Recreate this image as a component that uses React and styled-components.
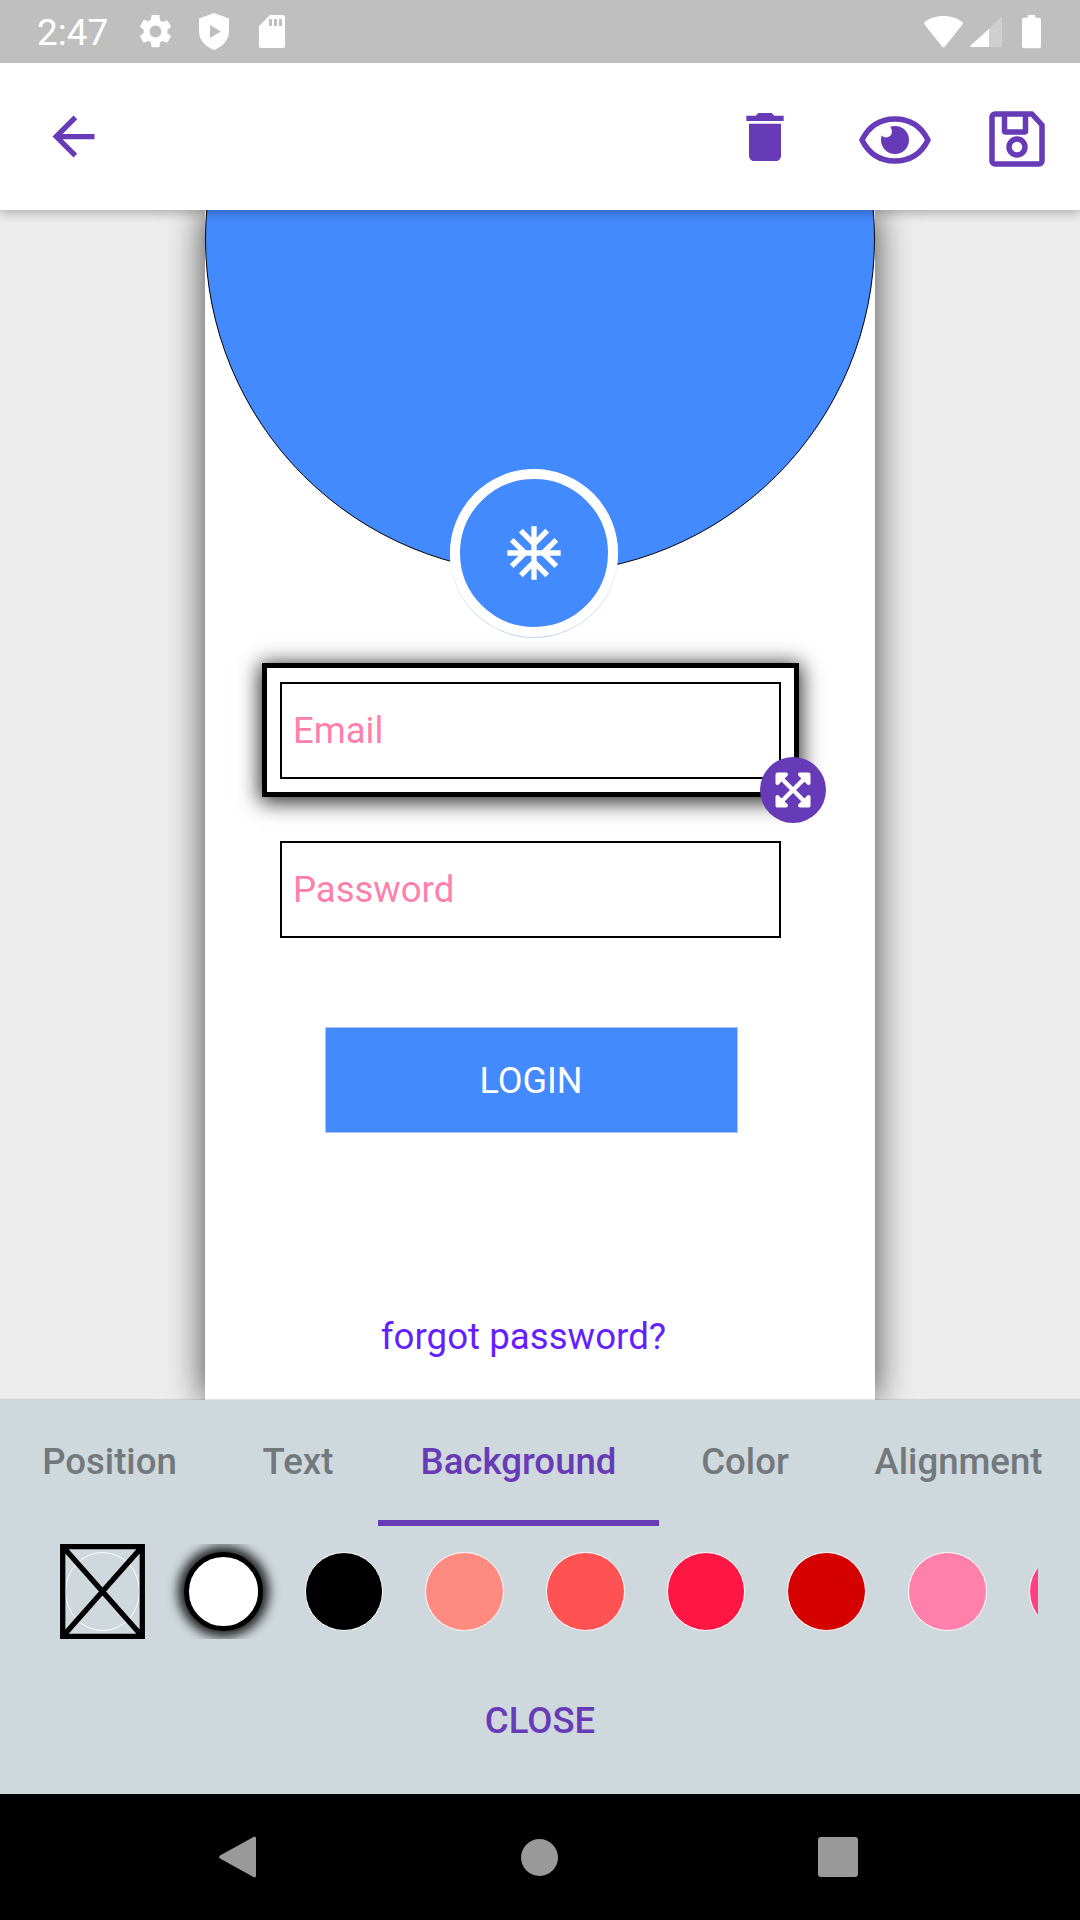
import React from "react";
import styled, { createGlobalStyle } from "styled-components";
import { MdAcUnit, MdArrowBack, MdDelete } from "react-icons/md";
import { FaExpandArrowsAlt } from "react-icons/fa";

const purple = "#673ab7";
const blue = "#448aff";
const pink = "#ff80ab";

const Global = createGlobalStyle`
  html, body { margin: 0; padding: 0; }
  body { font-family: Roboto, "Liberation Sans", sans-serif; }
`;

const Screen = styled.div`
  width: 1080px;
  height: 1920px;
  display: flex;
  flex-direction: column;
  overflow: hidden;
  background: #ededed;
`;

const StatusBar = styled.div`
  height: 63px;
  flex: none;
  background: #bfbfbf;
  display: flex;
  align-items: center;
  justify-content: space-between;
  padding: 0 39px 0 37px;
  color: #fff;
  font-size: 37px;
  position: relative;
  z-index: 3;
`;

const StatusGroup = styled.div`
  display: flex;
  align-items: center;
`;

const Clock = styled.span`
  margin-top: 1px;
`;

const StatusIcon = styled.svg`
  flex: none;
  margin-left: ${(p) => p.$ml}px;
`;

const AppBar = styled.div`
  height: 147px;
  flex: none;
  background: #fff;
  display: flex;
  align-items: center;
  justify-content: space-between;
  padding: 0 35px 0 42px;
  position: relative;
  z-index: 2;
  box-shadow: 0 3px 10px rgba(0, 0, 0, 0.28);
`;

const BackIcon = styled(MdArrowBack)`
  color: ${purple};
  font-size: 63px;
`;

const Actions = styled.div`
  display: flex;
  align-items: center;
`;

const TrashIcon = styled(MdDelete)`
  color: ${purple};
  font-size: 64px;
  margin-right: 62px;
`;

const EyeIcon = styled.svg`
  margin-right: 58px;
  margin-top: 6px;
`;

const SaveIcon = styled.svg`
  margin-top: 5px;
`;

const Canvas = styled.div`
  height: 1190px;
  flex: none;
  display: flex;
  justify-content: center;
`;

const Phone = styled.div`
  width: 670px;
  height: 100%;
  background: #fff;
  box-shadow: 0 0 34px rgba(0, 0, 0, 0.72);
  display: flex;
  flex-direction: column;
  align-items: center;
`;

const HeaderClip = styled.div`
  width: 100%;
  height: 366px;
  flex: none;
  overflow: hidden;
`;

const BlueCircle = styled.div`
  width: 670px;
  height: 670px;
  margin-top: -306px;
  box-sizing: border-box;
  border-radius: 50%;
  background: ${blue};
  border: 1px solid #000;
`;

const Logo = styled.div`
  width: 168px;
  height: 168px;
  flex: none;
  margin: -107px 0 0 -12px;
  box-sizing: border-box;
  border-radius: 50%;
  background: ${blue};
  border: 10px solid #fff;
  box-shadow: 0 1px 0 0 #c9d8f0;
  display: flex;
  align-items: center;
  justify-content: center;
  position: relative;
`;

const LogoIcon = styled(MdAcUnit)`
  color: #fff;
  font-size: 64px;
`;

const Selection = styled.div`
  width: 537px;
  height: 134px;
  flex: none;
  box-sizing: border-box;
  margin: 26px 0 0 -19px;
  border: 5px solid #000;
  box-shadow: 0 3px 20px 2px rgba(0, 0, 0, 0.85);
  display: flex;
  align-items: center;
  justify-content: center;
  position: relative;
`;

const PasswordSlot = styled.div`
  margin: 44px 0 0 -19px;
  flex: none;
`;

const Input = styled.div`
  width: 501px;
  height: 97px;
  box-sizing: border-box;
  border: 2.5px solid #000;
  padding-left: 11px;
  display: flex;
  align-items: center;
  color: ${pink};
  font-size: 36.5px;
  background: #fff;
`;

const ResizeHandle = styled.div`
  position: absolute;
  right: -32px;
  bottom: -31px;
  width: 66px;
  height: 66px;
  border-radius: 50%;
  background: ${purple};
  color: #fff;
  font-size: 40px;
  display: flex;
  align-items: center;
  justify-content: center;
`;

const LoginButton = styled.div`
  width: 413px;
  height: 106px;
  margin: 89px 0 0 -18px;
  padding-top: 1px;
  flex: none;
  box-sizing: border-box;
  background: ${blue};
  border: 1px solid #a9c6f5;
  color: #fff;
  font-size: 36px;
  display: flex;
  align-items: center;
  justify-content: center;
`;

const Forgot = styled.div`
  margin: 183px 0 0 -33px;
  font-size: 36.7px;
  line-height: 42px;
  color: #651fff;
`;

const Sheet = styled.div`
  height: 394px;
  flex: none;
  background: #cfd8dc;
  display: flex;
  flex-direction: column;
  position: relative;
  z-index: 1;
  box-shadow: 0 -1px 1px rgba(0, 0, 0, 0.1);
`;

const Tabs = styled.div`
  display: flex;
  height: 126px;
  flex: none;
  padding-left: 1px;
  overflow: hidden;
`;

const Tab = styled.div`
  width: ${(p) => p.$w}px;
  height: 126px;
  flex: none;
  box-sizing: border-box;
  text-align: center;
  padding-top: 41px;
  font-size: 36.6px;
  line-height: 42px;
  font-weight: 500;
  color: ${(p) => (p.$active ? purple : "#72787b")};
  border-bottom: 6px solid ${(p) => (p.$active ? purple : "transparent")};
`;

const Swatches = styled.div`
  width: 1038px;
  height: 95px;
  margin-top: 18px;
  flex: none;
  overflow: hidden;
  display: flex;
  align-items: center;
  gap: 42px;
  padding-left: 60px;
  box-sizing: border-box;
`;

const NoColor = styled.svg`
  flex: none;
  margin-right: -3px;
`;

const Swatch = styled.div`
  width: 78.7px;
  height: 78.7px;
  flex: none;
  box-sizing: border-box;
  border-radius: 50%;
  background: ${(p) => p.$color};
  border: 1px solid #fff;
`;

const SelectedSwatch = styled(Swatch)`
  background: #fff;
  border: 5px solid #000;
  box-shadow: 0 0 11px 6px rgba(0, 0, 0, 0.85);
`;

const CloseButton = styled.div`
  margin-top: 61px;
  text-align: center;
  color: ${purple};
  font-size: 36.5px;
  line-height: 42px;
  font-weight: 500;
`;

const NavBar = styled.div`
  height: 126px;
  flex: none;
  background: #000;
  display: flex;
  align-items: center;
  padding-left: 219px;
  box-sizing: border-box;
`;

const NavCircle = styled.div`
  width: 37px;
  height: 37px;
  border-radius: 50%;
  background: #999;
  margin-left: 264px;
`;

const NavSquare = styled.div`
  width: 40px;
  height: 40px;
  border-radius: 3px;
  background: #999;
  margin-left: 260px;
`;

const swatchColors = ["#000000", "#ff8a80", "#ff5252", "#ff1744", "#d50000", "#ff80ab", "#ff4081"];
const tabs = [
  ["Position", 217, false],
  ["Text", 160, false],
  ["Background", 281, true],
  ["Color", 172, false],
  ["Alignment", 255, false],
];

const App = () => (
  <Screen>
    <Global />
    <StatusBar>
      <StatusGroup>
        <Clock>2:47</Clock>
        <StatusIcon $ml={31} width="33" height="33" viewBox="2 2 20 20" fill="#fff">
          <path d="M19.14 12.94c.04-.3.06-.61.06-.94s-.02-.64-.07-.94l2.03-1.58a.49.49 0 0 0 .12-.61l-1.92-3.32a.49.49 0 0 0-.59-.22l-2.39.96a7 7 0 0 0-1.62-.94l-.36-2.54A.48.48 0 0 0 13.92 2h-3.84a.47.47 0 0 0-.47.41l-.36 2.54c-.59.24-1.13.57-1.62.94l-2.39-.96a.48.48 0 0 0-.59.22L2.74 8.87a.47.47 0 0 0 .12.61l2.03 1.58c-.05.3-.09.63-.09.94s.02.64.07.94l-2.03 1.58a.49.49 0 0 0-.12.61l1.92 3.32c.12.22.37.29.59.22l2.39-.96c.5.38 1.03.7 1.62.94l.36 2.54c.05.24.24.41.48.41h3.84c.24 0 .44-.17.47-.41l.36-2.54c.59-.24 1.13-.56 1.62-.94l2.39.96c.22.08.47 0 .59-.22l1.92-3.32a.47.47 0 0 0-.12-.61zM12 15.6A3.6 3.6 0 1 1 12 8.4a3.6 3.6 0 0 1 0 7.2z" />
        </StatusIcon>
        <StatusIcon $ml={27} width="30" height="37" viewBox="0 0 30 37">
          <path fill="#fff" fillRule="evenodd" d="M15 0l15 5.500V18c0 9-6 15.500-15 19C6 33.500 0 27 0 18V5.500zM11 12v13l11-6.500z" />
        </StatusIcon>
        <StatusIcon $ml={30} width="26" height="33" viewBox="0 0 26 33">
          <path fill="#fff" fillRule="evenodd" d="M11 0h13a2 2 0 0 1 2 2v29a2 2 0 0 1-2 2H2a2 2 0 0 1-2-2V11zM10 4v7h3V4zM15 4v7h3V4zM20 4v7h3V4z" />
        </StatusIcon>
      </StatusGroup>
      <StatusGroup>
        <StatusIcon $ml={0} width="41" height="32" viewBox="0 0 40 32">
          <path fill="#fff" d="M20 0c8 0 15 2.500 19 6.500a1.500 1.500 0 0 1 0 2L21.500 30.500a2 2 0 0 1-3 0L1 8.500a1.500 1.500 0 0 1 0-2C5 2.500 12 0 20 0z" />
        </StatusIcon>
        <StatusIcon $ml={6} width="32" height="32" viewBox="0 0 32 32">
          <path fill="#fff" fillOpacity="0.25" d="M32 0v31H19V13z" />
          <path fill="#fff" d="M19 13v18H1a1 1 0 0 1-.500-1.500z" />
        </StatusIcon>
        <StatusIcon $ml={20} width="19" height="35" viewBox="0 0 20 35">
          <path fill="#fff" d="M6 0h8v3h4a2 2 0 0 1 2 2v28a2 2 0 0 1-2 2H2a2 2 0 0 1-2-2V5a2 2 0 0 1 2-2h4z" />
        </StatusIcon>
      </StatusGroup>
    </StatusBar>

    <AppBar>
      <BackIcon />
      <Actions>
        <TrashIcon />
        <EyeIcon width="72" height="48" viewBox="0 0 72 48">
          <path fill="none" stroke={purple} strokeWidth="5.500" strokeLinejoin="round" d="M3 24C10 10 22 3 36 3s26 7 33 21c-7 14-19 21-33 21S10 38 3 24z" />
          <circle cx="36" cy="24" r="14" fill={purple} />
          <circle cx="27" cy="15.500" r="6" fill="#fff" />
        </EyeIcon>
        <SaveIcon width="56" height="56" viewBox="0 0 56 56" fill="none" stroke={purple} strokeWidth="5.500" strokeLinejoin="round">
          <path d="M3 6a3 3 0 0 1 3-3h37l10 11v36a3 3 0 0 1-3 3H6a3 3 0 0 1-3-3z" />
          <path d="M15.500 3v17a1 1 0 0 0 1 1h19a1 1 0 0 0 1-1V3" />
          <circle cx="28" cy="36" r="8" />
        </SaveIcon>
      </Actions>
    </AppBar>

    <Canvas>
      <Phone>
        <HeaderClip>
          <BlueCircle />
        </HeaderClip>
        <Logo>
          <LogoIcon />
        </Logo>
        <Selection>
          <Input>Email</Input>
          <ResizeHandle>
            <FaExpandArrowsAlt />
          </ResizeHandle>
        </Selection>
        <PasswordSlot>
          <Input>Password</Input>
        </PasswordSlot>
        <LoginButton>LOGIN</LoginButton>
        <Forgot>forgot password?</Forgot>
      </Phone>
    </Canvas>

    <Sheet>
      <Tabs>
        {tabs.map(([label, w, active]) => (
          <Tab key={label} $w={w} $active={active}>
            {label}
          </Tab>
        ))}
      </Tabs>
      <Swatches>
        <NoColor width="85" height="95" viewBox="0 0 85 95" fill="none" stroke="#000">
          <ellipse cx="42.500" cy="47.500" rx="37" ry="39" stroke="#fff" strokeWidth="1" />
          <path strokeWidth="5.300" d="M2.700 2.700h79.600v89.600H2.700zM4 4l77 87M81 4L4 91" />
        </NoColor>
        <SelectedSwatch />
        {swatchColors.map((c) => (
          <Swatch key={c} $color={c} />
        ))}
      </Swatches>
      <CloseButton>CLOSE</CloseButton>
    </Sheet>

    <NavBar>
      <svg width="38" height="42" viewBox="0 0 38 42">
        <path fill="#999" d="M37 2v38a1.500 1.500 0 0 1-2.500 1L1 22.500a2 2 0 0 1 0-3L34.500 1A1.500 1.500 0 0 1 37 2z" />
      </svg>
      <NavCircle />
      <NavSquare />
    </NavBar>
  </Screen>
);

export default App;
